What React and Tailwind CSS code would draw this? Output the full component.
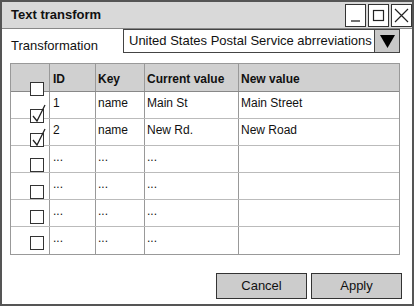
import React from "react";

const rows = [
  { id: "1", key: "name", cur: "Main St", next: "Main Street", checked: true },
  { id: "2", key: "name", cur: "New Rd.", next: "New Road", checked: true },
  { id: "...", key: "...", cur: "...", next: "", checked: false },
  { id: "...", key: "...", cur: "...", next: "", checked: false },
  { id: "...", key: "...", cur: "...", next: "", checked: false },
  { id: "...", key: "...", cur: "...", next: "", checked: false },
];

// vertical offsets of the sketchy checkboxes, one per row
const boxOffsets = ["mt-[17px]", "mt-[14px]", "mt-[12px]", "mt-[12px]", "mt-[10px]", "mt-[9px]"];

function Checkbox({ checked }) {
  return (
    <div className="relative w-[14px] h-[14px] border border-[#333] bg-white">
      {checked && (
        <svg className="absolute left-[0px] top-[-7px]" width="18" height="20" viewBox="0 0 18 20">
          <path d="M2 13 L6 18 L14 2" fill="none" stroke="#222" strokeWidth="1.3" />
        </svg>
      )}
    </div>
  );
}

function WinButton({ children }) {
  return (
    <div className="w-[21px] h-[23px] bg-white border border-[#333] flex items-center justify-center">
      {children}
    </div>
  );
}

export default function App() {
  return (
    <div className="w-[417px] h-[307px] bg-white overflow-hidden" style={{ fontFamily: '"Liberation Sans", sans-serif' }}>
      <div className="w-[414px] h-[306px] border-2 border-[#555] flex flex-col text-[#111]">
        {/* Title bar */}
        <div className="h-[27px] bg-[#d9d9d9] flex items-center justify-between border-b border-[#888]">
          <span className="pl-[9px] text-[13px] font-bold">Text transform</span>
          <div className="flex gap-[2px] items-center">
            <WinButton>
              <svg width="13" height="15" viewBox="0 0 13 15">
                <path d="M2 13 H11" stroke="#222" strokeWidth="1.3" />
              </svg>
            </WinButton>
            <WinButton>
              <svg width="13" height="13" viewBox="0 0 13 13">
                <rect x="1.5" y="1.5" width="10" height="10" fill="none" stroke="#222" strokeWidth="1.2" />
              </svg>
            </WinButton>
            <WinButton>
              <svg width="15" height="15" viewBox="0 0 15 15">
                <path d="M1 1 L14 14 M14 1 L1 14" stroke="#222" strokeWidth="1.2" />
              </svg>
            </WinButton>
          </div>
        </div>

        {/* Transformation row */}
        <div className="flex items-start">
          <span className="pl-[9px] pt-[7px] w-[121px] text-[13px]">Transformation</span>
          <div className="flex w-[277px] h-[24px] border border-[#444]">
            <div className="flex-1 flex items-center pl-[5px] text-[13px] whitespace-nowrap">
              United States Postal Service abrreviations
            </div>
            <div className="w-[25px] bg-[#c8c8c8] border-l border-[#444] flex items-center justify-center">
              <svg width="15" height="14" viewBox="0 0 15 14">
                <path d="M0 1 H15 L7.5 14 Z" fill="#000" />
              </svg>
            </div>
          </div>
        </div>

        {/* Table */}
        <div className="ml-[8px] mt-[7px] w-[390px] border border-[#999] text-[12px]">
          <div className="flex h-[28px] bg-[#d0d0d0] border-b border-[#888] font-bold">
            <div className="w-[39px] flex justify-end pr-[5px] border-r border-[#999]">
              <div className="mt-[18px]">
                <Checkbox checked={false} />
              </div>
            </div>
            <div className="w-[46px] pl-[3px] pt-[6px] border-r border-[#999]">ID</div>
            <div className="w-[49px] pl-[2px] pt-[6px] border-r border-[#999]">Key</div>
            <div className="w-[94px] pl-[2px] pt-[6px] border-r border-[#999]">Current value</div>
            <div className="flex-1 pl-[2px] pt-[6px]">New value</div>
          </div>
          {rows.map((r, i) => (
            <div key={i} className={`flex h-[27px] ${i < rows.length - 1 ? "border-b border-[#bbb]" : ""}`}>
              <div className="w-[39px] flex justify-end pr-[5px] border-r border-[#999]">
                <div className={boxOffsets[i]}>
                  <Checkbox checked={r.checked} />
                </div>
              </div>
              <div className="w-[46px] pl-[3px] pt-[2px] border-r border-[#999]">{r.id}</div>
              <div className="w-[49px] pl-[2px] pt-[2px] border-r border-[#999]">{r.key}</div>
              <div className="w-[94px] pl-[2px] pt-[2px] border-r border-[#999]">{r.cur}</div>
              <div className="flex-1 pl-[2px] pt-[2px]">{r.next}</div>
            </div>
          ))}
        </div>

        {/* Buttons */}
        <div className="flex justify-end gap-[4px] pr-[10px] mt-[18px]">
          <button className="w-[91px] h-[26px] bg-[#cccccc] border border-[#333] text-[13px]">Cancel</button>
          <button className="w-[91px] h-[26px] bg-[#cccccc] border border-[#333] text-[13px]">Apply</button>
        </div>
      </div>
    </div>
  );
}
